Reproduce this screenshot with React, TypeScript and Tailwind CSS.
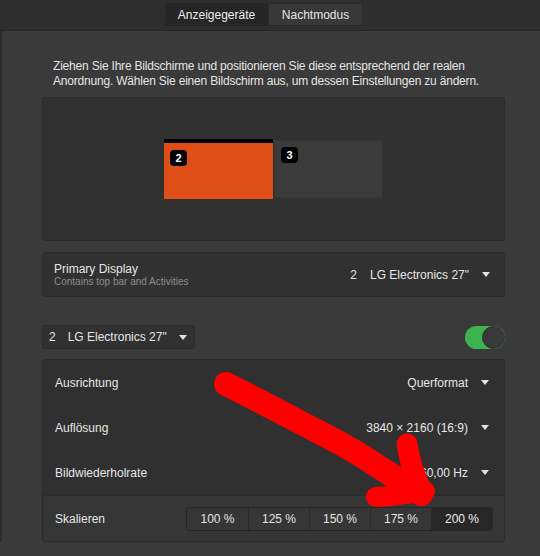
import React from "react";

function Caret() {
  return (
    <svg width="8" height="5" viewBox="0 0 8 5" className="shrink-0">
      <polygon points="0,0 8,0 4,5" fill="#e2e2e2" />
    </svg>
  );
}

function SettingRow({ label, value }: { label: string; value: string }) {
  return (
    <div className="flex h-[45px] items-center justify-between pl-[12px] pr-[15px]">
      <span>{label}</span>
      <div className="flex items-center gap-[13px]">
        <span>{value}</span>
        <Caret />
      </div>
    </div>
  );
}

const scales = ["100 %", "125 %", "150 %", "175 %", "200 %"];

export default function App() {
  return (
    <div className="relative h-[556px] w-[540px] overflow-hidden bg-[#3a3a3a] font-['Liberation_Sans',Arial,sans-serif] text-[12px] text-[#e6e6e6]">
      {/* header with tabs */}
      <div className="h-[31px] border-b border-[#262626] bg-[#2e2e2e] pl-[165px] pt-[3px]">
        <div className="flex h-[23px]">
          <div className="flex w-[103px] items-center justify-center rounded-l-[3px] bg-[#262626] text-[#ececec]">
            Anzeigegeräte
          </div>
          <div className="flex w-[95px] items-center justify-center rounded-r-[3px] border border-[#2a2a2a] bg-[#383838] text-[#e4e4e4]">
            Nachtmodus
          </div>
        </div>
      </div>

      <div className="border-l-2 border-[#2c2c2c] pl-[40px] pr-[35px]">
        <p className="pl-[11px] pt-[28px] leading-[15px] tracking-[-0.2px] text-[#e4e4e4]">
          Ziehen Sie Ihre Bildschirme und positionieren Sie diese entsprechend der realen
          <br />
          Anordnung. Wählen Sie einen Bildschirm aus, um dessen Einstellungen zu ändern.
        </p>

        {/* monitor arrangement */}
        <div className="mt-[8px] flex h-[144px] items-center justify-center gap-px rounded-[3px] border border-[#2b2b2b] bg-[#313131]">
          <div className="relative h-[60px] w-[109px] border-t-4 border-black bg-[#df4e17]">
            <span className="absolute left-[6px] top-[7px] flex h-[16px] w-[17px] items-center justify-center rounded-[4px] bg-black text-[11px] font-bold text-white">
              2
            </span>
          </div>
          <div className="relative h-[58px] w-[109px] border border-[#353535] bg-[#3b3b3b]">
            <span className="absolute left-[6px] top-[6px] flex h-[16px] w-[17px] items-center justify-center rounded-[4px] bg-black text-[11px] font-bold text-white">
              3
            </span>
          </div>
        </div>

        {/* primary display */}
        <div className="mt-[11px] flex h-[45px] items-center justify-between rounded-[3px] border border-[#2b2b2b] bg-[#313131] pl-[11px] pr-[14px]">
          <div className="flex flex-col">
            <span className="leading-[14px]">Primary Display</span>
            <span className="text-[10px] leading-[12px] text-[#8c8c8c]">Contains top bar and Activities</span>
          </div>
          <div className="flex items-center gap-[13px]">
            <span>2</span>
            <span>LG Electronics 27"</span>
            <Caret />
          </div>
        </div>

        {/* monitor selector + switch */}
        <div className="mt-[28px] flex h-[24px] items-center justify-between">
          <div className="flex h-[24px] w-[153px] items-center gap-[12px] rounded-[3px] border border-[#2a2a2a] bg-[#313131] pl-[6px]">
            <span>2</span>
            <span>LG Electronics 27"</span>
            <Caret />
          </div>
          <div className="flex h-[23px] w-[40px] items-center justify-end rounded-full bg-[#3db34e]">
            <div className="h-[23px] w-[23px] rounded-full border border-[#2f2f2f] bg-[#393939]" />
          </div>
        </div>

        {/* settings list */}
        <div className="mt-[10px] overflow-hidden rounded-[3px] border border-[#2b2b2b] bg-[#303030]">
          <SettingRow label="Ausrichtung" value="Querformat" />
          <SettingRow label="Auflösung" value="3840 × 2160 (16:9)" />
          <SettingRow label="Bildwiederholrate" value="60,00 Hz" />
          <div className="flex h-[46px] items-center justify-between border-t border-[#2a2a2a] bg-[#363636] pl-[12px] pr-[11px]">
            <span>Skalieren</span>
            <div className="flex h-[24px] overflow-hidden rounded-[3px] border border-[#272727]">
              {scales.map((s, i) => (
                <div
                  key={s}
                  className={
                    i === scales.length - 1
                      ? "flex w-[61px] items-center justify-center border-l border-[#2a2a2a] bg-[#272727] text-[#ececec]"
                      : i === 0
                        ? "flex w-[61px] items-center justify-center bg-[#363636] text-[#e2e2e2]"
                        : "flex w-[61px] items-center justify-center border-l border-[#2a2a2a] bg-[#363636] text-[#e2e2e2]"
                  }
                >
                  {s}
                </div>
              ))}
            </div>
          </div>
        </div>
      </div>

      {/* red hand-drawn arrow over the screenshot */}
      <svg className="pointer-events-none absolute left-0 top-0" width="540" height="556" viewBox="0 0 540 556">
        <g fill="none" stroke="#ff0000" strokeLinecap="round" strokeLinejoin="round">
          <path d="M226 384 C250 396 262 402 290 417 S340 442 365 458 S402 482 421 494" strokeWidth="24" />
          <path d="M407 444 Q411 470 423 493" strokeWidth="21" />
          <path d="M376 497 Q400 496 425 491" strokeWidth="20" />
        </g>
      </svg>
    </div>
  );
}
